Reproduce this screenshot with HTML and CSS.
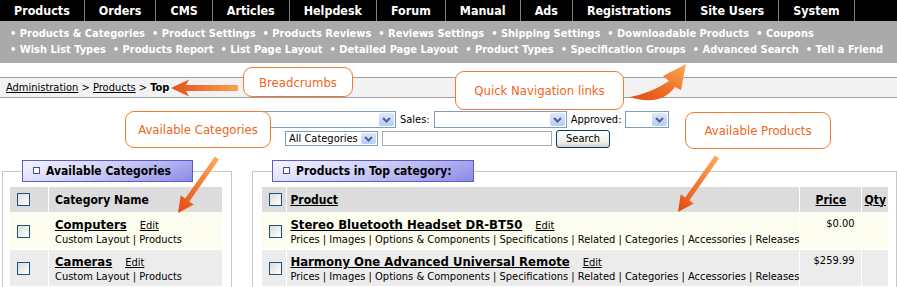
FILE: index.html
```html
<!DOCTYPE html>
<html>
<head>
<meta charset="utf-8">
<title>Products</title>
<link rel="stylesheet" href="styles.css">
</head>
<body>
<div class="page">
  <nav class="topnav">
    <a class="tab">Products</a><a class="tab">Orders</a><a class="tab">CMS</a><a class="tab">Articles</a><a class="tab">Helpdesk</a><a class="tab">Forum</a><a class="tab">Manual</a><a class="tab">Ads</a><a class="tab">Registrations</a><a class="tab">Site Users</a><a class="tab">System</a>
  </nav>
  <div class="quicknav">
    <div class="qrow">
      <a class="ql">• Products &amp; Categories</a><a class="ql">• Product Settings</a><a class="ql">• Products Reviews</a><a class="ql">• Reviews Settings</a><a class="ql">• Shipping Settings</a><a class="ql">• Downloadable Products</a><a class="ql">• Coupons</a>
    </div>
    <div class="qrow">
      <a class="ql">• Wish List Types</a><a class="ql">• Products Report</a><a class="ql">• List Page Layout</a><a class="ql">• Detailed Page Layout</a><a class="ql">• Product Types</a><a class="ql">• Specification Groups</a><a class="ql">• Advanced Search</a><a class="ql">• Tell a Friend</a>
    </div>
  </div>
  <div class="crumbs"><a class="clink">Administration</a> &gt; <a class="clink">Products</a> &gt; <b>Top</b></div>

  <div class="filters">
    <div class="frow r1">
      <span class="sel s1"><span class="seltext"></span><span class="dd"><svg width="9" height="6" viewBox="0 0 9 6"><path d="M1 1 L4.5 4.5 L8 1" fill="none" stroke="#4d6185" stroke-width="2"/></svg></span></span>
      <span class="flabel">Sales:</span>
      <span class="sel s2"><span class="seltext"></span><span class="dd"><svg width="9" height="6" viewBox="0 0 9 6"><path d="M1 1 L4.5 4.5 L8 1" fill="none" stroke="#4d6185" stroke-width="2"/></svg></span></span>
      <span class="flabel">Approved:</span>
      <span class="sel s3"><span class="seltext"></span><span class="dd"><svg width="9" height="6" viewBox="0 0 9 6"><path d="M1 1 L4.5 4.5 L8 1" fill="none" stroke="#4d6185" stroke-width="2"/></svg></span></span>
    </div>
    <div class="frow r2">
      <span class="sel s4"><span class="seltext">All Categories</span><span class="dd"><svg width="9" height="6" viewBox="0 0 9 6"><path d="M1 1 L4.5 4.5 L8 1" fill="none" stroke="#4d6185" stroke-width="2"/></svg></span></span>
      <span class="tinput"></span>
      <span class="btn">Search</span>
    </div>
  </div>

  <div class="panels">
    <fieldset class="panel pleft">
      <legend class="plegend"><span class="lic"></span>Available Categories</legend>
      <table class="grid cats">
        <tr class="head">
          <td class="cbcol"><span class="cb"></span></td>
          <td class="namecol">Category Name</td>
        </tr>
        <tr class="odd">
          <td class="cbcol"><span class="cb"></span></td>
          <td class="namecol"><div class="l1"><a class="title">Computers</a><a class="edit">Edit</a></div><div class="l2">Custom Layout | Products</div></td>
        </tr>
        <tr class="even">
          <td class="cbcol"><span class="cb"></span></td>
          <td class="namecol"><div class="l1"><a class="title">Cameras</a><a class="edit">Edit</a></div><div class="l2">Custom Layout | Products</div></td>
        </tr>
      </table>
    </fieldset>
    <fieldset class="panel pright">
      <legend class="plegend"><span class="lic"></span>Products in Top category:</legend>
      <table class="grid prods">
        <tr class="head">
          <td class="cbcol"><span class="cb"></span></td>
          <td class="prodcol"><a class="hlink">Product</a></td>
          <td class="pricecol hc"><a class="hlink">Price</a></td>
          <td class="qtycol hc"><a class="hlink">Qty</a></td>
        </tr>
        <tr class="odd">
          <td class="cbcol"><span class="cb"></span></td>
          <td class="prodcol"><div class="l1"><a class="title">Stereo Bluetooth Headset DR-BT50</a><a class="edit">Edit</a></div><div class="l2">Prices | Images | Options &amp; Components | Specifications | Related | Categories | Accessories | Releases</div></td>
          <td class="pricecol">$0.00</td>
          <td class="qtycol"></td>
        </tr>
        <tr class="even">
          <td class="cbcol"><span class="cb"></span></td>
          <td class="prodcol"><div class="l1"><a class="title">Harmony One Advanced Universal Remote</a><a class="edit">Edit</a></div><div class="l2">Prices | Images | Options &amp; Components | Specifications | Related | Categories | Accessories | Releases</div></td>
          <td class="pricecol">$259.99</td>
          <td class="qtycol"></td>
        </tr>
      </table>
    </fieldset>
  </div>

  <!-- annotations -->
  <div class="callout c-crumbs">Breadcrumbs</div>
  <div class="callout c-quick">Quick Navigation links</div>
  <div class="callout c-cats">Available Categories</div>
  <div class="callout c-prods">Available Products</div>

  <svg class="arrow a-crumbs" width="72" height="20" viewBox="0 0 72 20">
    <defs><linearGradient id="ga" x1="0" y1="0" x2="1" y2="0"><stop offset="0" stop-color="#e4501a"/><stop offset="1" stop-color="#f9a04c"/></linearGradient></defs>
    <path d="M1 10 L19 1.5 L16 7 L68 7 L68 13 L16 13 L19 18.5 Z" fill="url(#ga)"/>
  </svg>
  <svg class="arrow a-quick" width="66" height="46" viewBox="0 0 66 46">
    <defs><linearGradient id="gq" x1="0" y1="1" x2="1" y2="0"><stop offset="0" stop-color="#e04a12"/><stop offset="0.5" stop-color="#f07028"/><stop offset="1" stop-color="#fcaa58"/></linearGradient></defs>
    <path d="M5 37 Q35 47 50 27 L56 30 L61 4 L38 16 L44 21 Q26 33 5 37 Z" fill="url(#gq)"/>
  </svg>
  <svg class="arrow a-cats" width="52" height="62" viewBox="0 0 52 62">
    <defs><linearGradient id="gc" x1="1" y1="0" x2="0" y2="1"><stop offset="0" stop-color="#fdae5a"/><stop offset="1" stop-color="#e44a10"/></linearGradient></defs>
    <path d="M42.96 1.55 L47.04 4.45 L17.3 46.39 L21.79 49.57 L6 58 L8.73 40.31 L13.22 43.49 Z" fill="url(#gc)"/>
  </svg>
  <svg class="arrow a-prods" width="52" height="62" viewBox="0 0 52 62">
    <defs><linearGradient id="gp" x1="1" y1="0" x2="0" y2="1"><stop offset="0" stop-color="#fdae5a"/><stop offset="1" stop-color="#e44a10"/></linearGradient></defs>
    <path d="M42.96 1.55 L47.04 4.45 L17.3 46.39 L21.79 49.57 L6 58 L8.73 40.31 L13.22 43.49 Z" fill="url(#gp)"/>
  </svg>
</div>
</body>
</html>
```

FILE: styles.css
```css
html, body {
  margin: 0;
  padding: 0;
  background: #fff;
}
body {
  font-family: "DejaVu Sans Condensed", "DejaVu Sans", sans-serif;
  font-stretch: condensed;
  font-size: 11px;
  color: #000;
}
.page {
  position: relative;
  width: 897px;
  height: 287px;
  overflow: hidden;
}

/* top navigation */
.topnav {
  display: flex;
  background: #000;
  height: 21px;
}
.tab {
  color: #fff;
  font-weight: bold;
  font-size: 12.4px;
  line-height: 21px;
  padding: 0 14px;
  border-right: 1px solid #808080;
  white-space: nowrap;
}

/* quick nav */
.quicknav {
  background: #aaaaaa;
  height: 42px;
  box-sizing: border-box;
  padding: 5px 0 0 10px;
}
.qrow {
  display: flex;
  gap: 7px;
  line-height: 16px;
  white-space: nowrap;
}
.ql {
  color: #fff;
  font-weight: bold;
  font-size: 11px;
}

/* breadcrumbs */
.crumbs {
  margin-top: 14px;
  height: 19px;
  line-height: 19px;
  border-top: 1px solid #a0a0a0;
  border-bottom: 1px solid #a0a0a0;
  background: #f2f2f2;
  padding-left: 6px;
  font-size: 11px;
}
.clink {
  color: #000;
  text-decoration: underline;
}

/* filters */
.filters {
  margin-top: 13px;
}
.frow {
  display: flex;
  align-items: center;
  gap: 4px;
  font-size: 11px;
}
.r1 {
  padding-left: 225px;
  height: 17px;
}
.r2 {
  padding-left: 285px;
  margin-top: 1px;
  height: 19px;
}
.sel {
  display: flex;
  align-items: stretch;
  box-sizing: border-box;
  border: 1px solid #7f9db9;
  background: #fff;
  height: 17px;
}
.r2 .sel {
  height: 15px;
}
.seltext {
  flex: 1;
  padding-left: 3px;
  line-height: 13px;
  white-space: nowrap;
  overflow: hidden;
}
.dd {
  width: 15px;
  margin: 1px;
  border-radius: 2px;
  background: linear-gradient(#dde7fd, #b6cbf7);
  display: flex;
  align-items: center;
  justify-content: center;
}
.s1 { width: 171px; }
.s2 { width: 133px; }
.s3 { width: 44px; }
.s4 { width: 93px; }
.tinput {
  width: 170px;
  height: 15px;
  box-sizing: border-box;
  border: 1px solid #a5acb2;
  background: #fff;
}
.btn {
  width: 54px;
  height: 18px;
  box-sizing: border-box;
  border: 1px solid #003c74;
  border-radius: 3px;
  background: linear-gradient(#ffffff, #f0efe7 70%, #d6d0c5);
  text-align: center;
  line-height: 16px;
  font-size: 11px;
}

/* panels */
.panels {
  display: flex;
  margin-top: 12px;
  padding-left: 2px;
}
.panel {
  margin: 0;
  padding: 0;
  border: 1px solid #c8c8c8;
  min-width: 0;
  height: 150px;
}
.pleft { width: 230px; box-sizing: border-box; }
.pright { width: 645px; box-sizing: border-box; margin-left: 20px; }
.plegend {
  margin-left: 19px;
  padding: 0 21px 0 10px;
  height: 22px;
  box-sizing: border-box;
  line-height: 20px;
  border: 1px solid #5c5cc8;
  background: linear-gradient(160deg, #f6f6ff 0%, #cfcff7 45%, #8b8be6 100%);
  font-weight: bold;
  font-size: 12px;
  white-space: nowrap;
}
.lic {
  display: inline-block;
  width: 5px;
  height: 5px;
  border: 1px solid #4646b8;
  background: #fff;
  margin-right: 6px;
  vertical-align: 1px;
}

/* tables */
.grid {
  border-collapse: collapse;
  margin-top: 5px;
}
.cats { margin-left: 7px; width: 212px; }
.prods { margin-left: 9px; width: 626px; }
.grid td {
  padding: 0;
  vertical-align: middle;
  border-top: 1px solid #fff;
}
.grid td + td {
  border-left: 1px solid #fff;
}
.grid tr.head td {
  background: #dcdcdc;
  height: 25px;
  font-weight: bold;
  font-size: 12px;
  border-top: 0;
}
.grid tr.odd td,
.grid tr.even td {
  height: 32px;
  padding-top: 4px;
  vertical-align: top;
}
.grid tr.odd td { background: #fdfdef; }
.grid tr.even td { background: #ececec; }
.grid td.cbcol { padding-left: 7px; }
.grid tr.odd td.cbcol,
.grid tr.even td.cbcol {
  vertical-align: middle;
  padding-top: 2px;
  padding-bottom: 2px;
}
.cats .cbcol { width: 31px; }
.prods .cbcol { width: 19px; }
.cb {
  display: block;
  width: 13px;
  height: 13px;
  box-sizing: border-box;
  border: 1px solid #1c5180;
  background: linear-gradient(135deg, #dcdcd7, #ffffff);
}
.grid td.namecol { padding-left: 6px; }
.grid td.prodcol { padding-left: 3px; }
.l1 {
  line-height: 15px;
  white-space: nowrap;
}
.title {
  font-weight: bold;
  font-size: 13px;
  text-decoration: underline;
  color: #000;
}
.edit {
  margin-left: 13px;
  font-size: 11px;
  text-decoration: underline;
  color: #000;
}
.l2 {
  line-height: 14px;
  font-size: 11px;
  white-space: nowrap;
}
.hlink {
  text-decoration: underline;
  color: #000;
}
.pricecol { width: 59px; }
.qtycol { width: 27px; }
.hc { text-align: center; }
.grid tr.odd td.pricecol,
.grid tr.even td.pricecol {
  text-align: right;
  padding-right: 7px;
  line-height: 14px;
  font-size: 11px;
}

/* annotations */
.callout {
  position: absolute;
  box-sizing: border-box;
  border: 1px solid #f07a32;
  border-radius: 9px;
  background: #fff;
  color: #ef6522;
  font-family: "DejaVu Sans Condensed", "DejaVu Sans", sans-serif;
  font-size: 13px;
  display: flex;
  align-items: center;
  justify-content: center;
}
.c-crumbs { left: 243px; top: 67px; width: 110px; height: 30px; }
.c-quick { left: 455px; top: 71px; width: 169px; height: 39px; }
.c-cats { left: 125px; top: 111px; width: 146px; height: 37px; }
.c-prods { left: 685px; top: 112px; width: 146px; height: 37px; }
.arrow { position: absolute; }
.a-crumbs { left: 170px; top: 78px; }
.a-quick { left: 625px; top: 60px; }
.a-cats { left: 172px; top: 155px; }
.a-prods { left: 672px; top: 154px; }
```
